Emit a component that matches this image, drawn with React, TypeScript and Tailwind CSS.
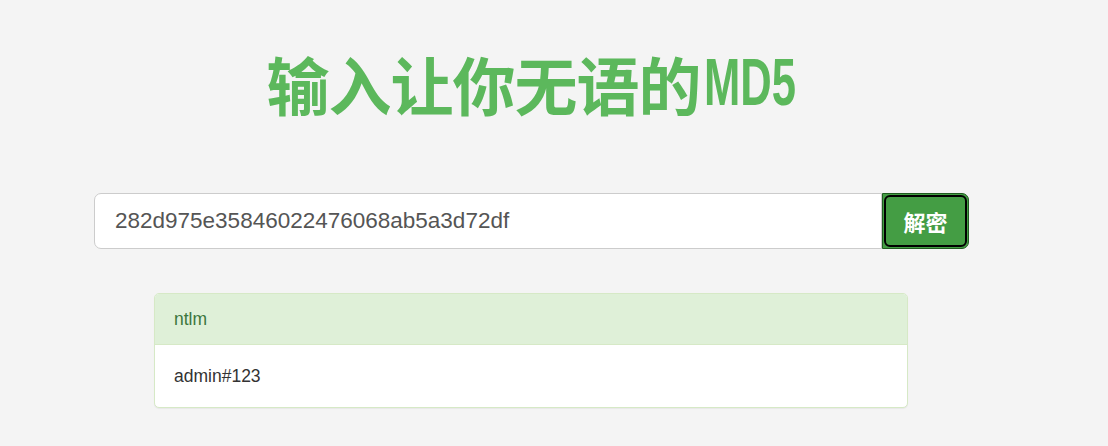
export default function App() {
  return (
    <div className="min-h-[446px] w-full bg-[#f4f4f4] font-['Liberation_Sans',Arial,sans-serif] text-[#333]">
      <div className="w-[1062px] pt-[39px]">
        <h1 className="flex items-center justify-center text-[63px] font-bold leading-[86px] text-[#5cb85c]">
          <span className="font-['Noto_Sans_CJK_SC',sans-serif] tracking-[-1px]">输入让你无语的</span>
          <span className="ml-[3px] inline-block w-[92px] whitespace-nowrap">
            <span className="inline-block origin-left scale-x-[0.66] font-['Liberation_Sans',Arial,sans-serif] text-[66px] leading-[86px]">
              MD5
            </span>
          </span>
        </h1>

        <div className="ml-[94px] mt-[67px] flex w-[875px]">
          <div className="flex h-[56px] flex-1 items-center rounded-l-[7px] border border-[#ccc] bg-white px-[20px] text-[22.5px] text-[#555]">
            282d975e35846022476068ab5a3d72df
          </div>
          <button
            type="button"
            className="flex h-[56px] w-[87px] items-center justify-center rounded-r-[7px] border border-[#1f5c1f] bg-[#449d44] p-0"
          >
            <span className="flex h-[52px] w-[83px] items-center justify-center rounded-[6px] border-2 border-black font-['Noto_Sans_CJK_SC',sans-serif] text-[22px] font-bold text-white">
              解密
            </span>
          </button>
        </div>

        <div className="ml-[154px] mt-[44px] w-[754px] overflow-hidden rounded-[5px] border border-[#d6e9c6] bg-white shadow-[0_1px_1px_rgba(0,0,0,0.05)]">
          <div className="flex h-[51px] items-center border-b border-[#d6e9c6] bg-[#dff0d8] px-[19px] text-[17.5px] text-[#3c763d]">
            ntlm
          </div>
          <div className="flex h-[62px] items-center px-[19px] text-[17.5px] text-[#333]">
            admin#123
          </div>
        </div>
      </div>
    </div>
  );
}
